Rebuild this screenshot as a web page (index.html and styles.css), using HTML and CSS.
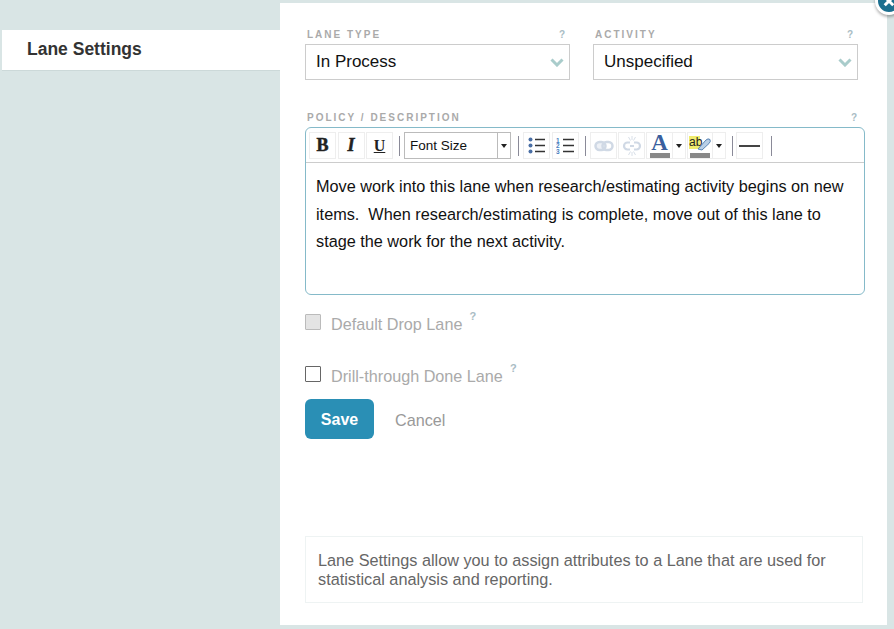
FILE: index.html
```html
<!DOCTYPE html>
<html lang="en">
<head>
  <meta charset="UTF-8">
  <title>Lane Settings</title>
  <link rel="stylesheet" href="styles.css">
</head>
<body>

  <div class="sidebar">
    <div class="tab">Lane Settings</div>
  </div>

  <div class="panel">
    <div class="field-row">
      <div class="field">
        <div class="field-label"><span>LANE TYPE</span><span class="hint">?</span></div>
        <div class="select-box">
          <span>In Process</span>
          <svg class="chevron" width="14" height="9" viewBox="0 0 14 9"><path d="M1.5 1.5 L7 7 L12.5 1.5" fill="none" stroke="#a9cccb" stroke-width="3"/></svg>
        </div>
      </div>
      <div class="field">
        <div class="field-label"><span>ACTIVITY</span><span class="hint">?</span></div>
        <div class="select-box">
          <span>Unspecified</span>
          <svg class="chevron" width="14" height="9" viewBox="0 0 14 9"><path d="M1.5 1.5 L7 7 L12.5 1.5" fill="none" stroke="#a9cccb" stroke-width="3"/></svg>
        </div>
      </div>
    </div>

    <div class="field-label policy-label"><span>POLICY / DESCRIPTION</span><span class="hint">?</span></div>
    <div class="editor">
      <div class="toolbar">
        <div class="tool"><span class="glyph-b">B</span></div>
        <div class="tool"><span class="glyph-i">I</span></div>
        <div class="tool"><span class="glyph-u">U</span></div>
        <div class="sep"></div>
        <div class="size-select">
          <span class="size-text">Font Size</span>
          <span class="size-arrow"><i class="caret"></i></span>
        </div>
        <div class="sep sep-after-size"></div>
        <div class="tool">
          <svg width="18" height="17" viewBox="0 0 18 17">
            <circle cx="2.5" cy="2.500" r="2" fill="#4a6fa5"/><circle cx="2.5" cy="8.500" r="2" fill="#4a6fa5"/><circle cx="2.5" cy="14.500" r="2" fill="#4a6fa5"/>
            <path d="M7 2.500h10M7 8.500h10M7 14.500h10" stroke="#333" stroke-width="1.4"/>
          </svg>
        </div>
        <div class="tool">
          <svg width="18" height="17" viewBox="0 0 18 17">
            <text x="0" y="5.500" class="num-text">1</text>
            <text x="0" y="11" class="num-text">2</text>
            <text x="0" y="16.500" class="num-text">3</text>
            <path d="M7 2.500h11M7 8.500h11M7 14.500h11" stroke="#333" stroke-width="1.4"/>
          </svg>
        </div>
        <div class="sep sep-after-list"></div>
        <div class="tool tool-link">
          <svg width="20" height="12" viewBox="0 0 20 12">
            <rect x="1.5" y="2" width="10" height="8" rx="4" fill="#eef1f6" stroke="#d0d9e5" stroke-width="2.500"/>
            <rect x="8.500" y="2" width="10" height="8" rx="4" fill="none" stroke="#d0d9e5" stroke-width="2.500"/>
          </svg>
        </div>
        <div class="tool tool-link">
          <svg width="20" height="20" viewBox="0 0 20 20">
            <path d="M8 6.500H5.500a3.500 3.500 0 0 0 0 7H8M12 6.500h2.500a3.500 3.500 0 0 1 0 7H12M8 10h4" fill="none" stroke="#d0d9e5" stroke-width="2.200"/>
            <path d="M6.500 1l2 3.500M13.500 1l-2 3.500M6.500 19l2-3.500M13.500 19l-2-3.500M10 0v4M10 16v4" stroke="#d8dfe8" stroke-width="1"/>
          </svg>
        </div>
        <div class="tool tool-color">
          <span class="glyph-a">A</span>
          <span class="swatch"></span>
        </div>
        <div class="tool-arrow"><i class="caret"></i></div>
        <div class="tool tool-color tool-mark">
          <svg width="22" height="16" viewBox="0 0 22 16">
            <rect x="0" y="0" width="11" height="13" fill="#f0ec6e"/>
            <text x="0" y="10" class="ab-text">ab</text>
            <path d="M9 13 L17 4 Q19 2 21 3.500 Q22 5.500 20 7.500 L13 14 Z" fill="#b9cfe6" stroke="#5b86b5" stroke-width="1"/>
          </svg>
          <span class="swatch"></span>
        </div>
        <div class="tool-arrow"><i class="caret"></i></div>
        <div class="sep sep-after-color"></div>
        <div class="tool"><span class="hr-line"></span></div>
        <div class="sep sep-end"></div>
      </div>
      <div class="editor-body">Move work into this lane when research/estimating activity begins on new items.&nbsp; When research/estimating is complete, move out of this lane to stage the work for the next activity.</div>
    </div>

    <div class="check-row check-disabled">
      <span class="checkbox"></span>
      <span>Default Drop Lane</span>
      <sup class="hint">?</sup>
    </div>
    <div class="check-row check-second">
      <span class="checkbox"></span>
      <span>Drill-through Done Lane</span>
      <sup class="hint">?</sup>
    </div>

    <div class="actions">
      <div class="save-btn">Save</div>
      <div class="cancel-link">Cancel</div>
    </div>

    <div class="help-box">Lane Settings allow you to assign attributes to a Lane that are used for statistical analysis and reporting.</div>
  </div>

  <div class="close-btn">
    <svg width="12" height="12" viewBox="0 0 14 14"><path d="M2 2 L12 12 M12 2 L2 12" stroke="#fff" stroke-width="3.500"/></svg>
  </div>

</body>
</html>
```

FILE: styles.css
```css
html, body {
  height: 100%;
}

body {
  margin: 0;
  width: 894px;
  height: 629px;
  overflow: hidden;
  display: flex;
  align-items: flex-start;
  position: relative;
  background: #d9e5e5;
  font-family: "Liberation Sans", Arial, sans-serif;
}

.sidebar {
  width: 280px;
  flex-shrink: 0;
  padding: 30px 0 0 2px;
  box-sizing: border-box;
}

.tab {
  height: 41px;
  background: white;
  border-bottom: 1px solid #ccd9d9;
  box-sizing: border-box;
  padding-left: 25px;
  line-height: 39px;
  font-size: 17.500px;
  font-weight: bold;
  color: #333;
}

.panel {
  width: 607px;
  height: 622px;
  margin-top: 3px;
  padding: 27px 22px 0 25px;
  box-sizing: border-box;
  background: white;
  display: flex;
  flex-direction: column;
}

.field-row {
  display: flex;
  gap: 23px;
}

.field {
  width: 265px;
}

.field-label {
  display: flex;
  justify-content: space-between;
  height: 14px;
  padding: 0 5px 0 2px;
  font-size: 10px;
  line-height: 10px;
  font-weight: bold;
  letter-spacing: 2px;
  color: #aaa;
}

.hint {
  font-size: 10px;
  font-weight: bold;
  letter-spacing: 0;
  color: #a9bcc4;
}

.select-box {
  height: 36px;
  border: 1px solid #ccc;
  box-sizing: border-box;
  padding: 0 5px 0 10px;
  display: flex;
  align-items: center;
  justify-content: space-between;
  font-size: 17px;
  color: #111;
}

.chevron {
  margin-top: 1px;
}

.policy-label {
  margin-top: 33px;
  padding-right: 8px;
}

.editor {
  height: 168px;
  border: 1px solid #85bac9;
  border-radius: 6px;
  box-sizing: border-box;
}

.toolbar {
  height: 35px;
  border-bottom: 1px solid #ccc;
  box-sizing: border-box;
  padding: 4px 0 0 3px;
  display: flex;
  align-items: flex-start;
}

.tool {
  width: 27px;
  height: 27px;
  margin-right: 1.500px;
  border: 1px solid #eee;
  box-sizing: border-box;
  display: flex;
  align-items: center;
  justify-content: center;
  flex-shrink: 0;
}

.glyph-b, .glyph-i {
  font-family: "Liberation Serif", serif;
  font-weight: bold;
  font-size: 18px;
  color: #222;
  -webkit-text-stroke: 0.5px #222;
}

.glyph-i {
  font-style: italic;
}

.glyph-u {
  font-family: "Liberation Serif", serif;
  font-weight: bold;
  font-size: 16px;
  line-height: 17px;
  text-decoration: underline;
  color: #222;
}

.sep {
  width: 1px;
  height: 20px;
  margin: 4px 4px 0 4.500px;
  background: #8a8a98;
  flex-shrink: 0;
}

.sep-after-size {
  margin-left: 7px;
}

.sep-after-list {
  margin-left: 5px;
}

.sep-after-color {
  margin-left: 6px;
  margin-right: 3px;
}

.sep-end {
  margin-left: 6.500px;
}

.size-select {
  width: 107px;
  height: 27px;
  border: 1px solid #bbb;
  box-sizing: border-box;
  display: flex;
  align-items: center;
  flex-shrink: 0;
}

.size-text {
  flex: 1;
  padding-left: 5px;
  font-size: 13.500px;
  color: #111;
}

.size-arrow {
  width: 12px;
  height: 100%;
  border-left: 1px solid #bbb;
  display: flex;
  align-items: center;
  justify-content: center;
}

.caret {
  width: 0;
  height: 0;
  border-left: 3.500px solid transparent;
  border-right: 3.500px solid transparent;
  border-top: 4px solid #222;
}

.tool-link {
  margin-right: 1px;
}

.tool-color {
  margin-right: 0;
  flex-direction: column;
  justify-content: flex-start;
}

.tool-mark {
  width: 26px;
  margin-left: 1px;
  padding-top: 3px;
}

.glyph-a {
  font-family: "Liberation Serif", serif;
  font-weight: bold;
  font-size: 23px;
  line-height: 20px;
  color: #3a5f9e;
}

.swatch {
  width: 20px;
  height: 5px;
  flex-shrink: 0;
  background: #888;
}

.tool-mark .swatch {
  margin-top: 1px;
}

.tool-arrow {
  width: 13px;
  height: 27px;
  border: 1px solid #eee;
  border-left: none;
  box-sizing: border-box;
  display: flex;
  align-items: center;
  justify-content: center;
  flex-shrink: 0;
}

.ab-text {
  font-size: 12px;
  fill: #222;
}

.num-text {
  font-size: 6.500px;
  font-weight: bold;
  fill: #4a7fc0;
}

.hr-line {
  width: 21px;
  height: 2px;
  background: #444;
}

.editor-body {
  padding: 10px 10px 0 10px;
  font-size: 16.250px;
  line-height: 27.500px;
  color: #111;
}

.check-row {
  display: flex;
  align-items: center;
  font-size: 16.200px;
  color: #aaa;
  height: 20px;
}

.check-row .hint {
  font-size: 11px;
  margin: -17px 0 0 7px;
}

.check-disabled {
  margin-top: 19px;
}

.check-second {
  margin-top: 32px;
}

.checkbox {
  width: 16px;
  height: 16px;
  margin: 0 10px 4px 0;
  border: 1px solid #666;
  box-sizing: border-box;
  background: white;
  border-radius: 1px;
}

.check-disabled .checkbox {
  border-color: #bbb;
  background: #e4e4e4;
}

.actions {
  margin-top: 13px;
  display: flex;
  align-items: center;
  gap: 21px;
}

.save-btn {
  width: 69px;
  height: 40px;
  background: #2a8fb5;
  border-radius: 6px;
  text-align: center;
  line-height: 41px;
  font-size: 16px;
  font-weight: bold;
  color: white;
}

.cancel-link {
  padding-top: 3px;
  font-size: 16.200px;
  color: #999;
}

.help-box {
  width: 558px;
  height: 67px;
  margin-top: 97px;
  border: 1px solid #eef3f3;
  box-sizing: border-box;
  padding: 14px 12px 0 12px;
  font-size: 16.250px;
  line-height: 19px;
  color: #666;
}

/* sits on top of the panel corner */
.close-btn {
  position: absolute;
  left: 875px;
  top: -13px;
  width: 28px;
  height: 28px;
  box-sizing: border-box;
  border: 3px solid white;
  border-radius: 50%;
  background: #1c6f8f;
  box-shadow: 0 2px 3px rgba(0, 0, 0, 0.3);
  display: flex;
  align-items: center;
  justify-content: center;
}
```
